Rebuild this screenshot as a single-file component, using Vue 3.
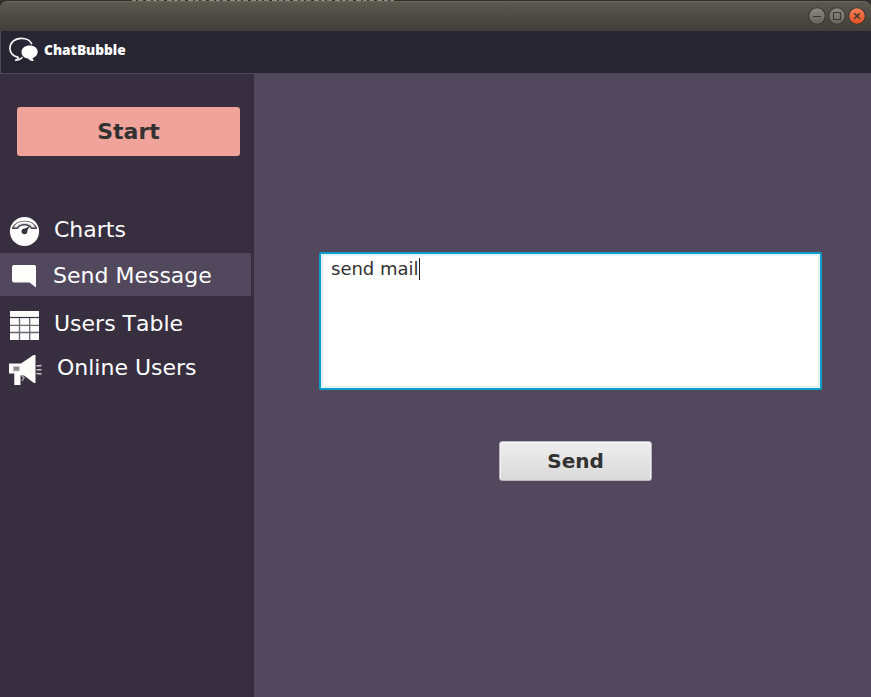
<script setup>
import { ref } from 'vue'

const message = ref('send mail')
const items = [
  { id: 'charts', label: 'Charts' },
  { id: 'message', label: 'Send Message' },
  { id: 'table', label: 'Users Table' },
  { id: 'online', label: 'Online Users' }
]
const active = ref('message')
</script>

<template>
  <div class="window">
    <div class="backdrop"></div>
    <div class="titlebar">
      <svg class="controls" width="64" height="31" viewBox="0 0 64 31">
        <defs>
          <linearGradient id="grey" x1="0" y1="0" x2="0" y2="1">
            <stop offset="0" stop-color="#8b8981" /><stop offset="1" stop-color="#65645d" />
          </linearGradient>
          <linearGradient id="orange" x1="0" y1="0" x2="0" y2="1">
            <stop offset="0" stop-color="#f68058" /><stop offset="1" stop-color="#e05020" />
          </linearGradient>
        </defs>
        <g stroke="#393832" stroke-width="1.1">
          <circle cx="10" cy="16" r="8.3" fill="url(#grey)" />
          <circle cx="30" cy="16" r="8.3" fill="url(#grey)" />
          <circle cx="50" cy="16" r="8.3" fill="url(#orange)" />
          <path d="M6 16.500h8M26.500 12.500h7v7h-7z" fill="none" />
          <path d="M47.200 13.200l5.600 5.600M52.800 13.200l-5.600 5.600" fill="none" stroke-width="1.500" />
        </g>
      </svg>
    </div>
    <header class="header">
      <svg width="44" height="42" viewBox="0 31 44 42">
        <path d="M18.500 57.300C13.500 56.500 9.900 53 9.900 48.500C9.900 42.500 15 38.300 21 38.300C26.500 38.300 30.800 40.800 31.800 44.200" fill="none" stroke="#f4f4f2" stroke-width="1.700" />
        <path d="M18.500 57Q18.500 59.300 15 60.300Q19.500 60.500 22.500 57.300" fill="none" stroke="#f4f4f2" stroke-width="1.400" />
        <path d="M29.700 45.500c4.600 0 8 2.700 8 6.300 0 3-1.800 5.200-5 6.200 0 1.500.5 2.300 1.500 3-3 0-5.200-1-6.200-2.600-4-.3-6.500-3-6.500-6.400 0-3.800 3.600-6.500 8.200-6.500z" fill="#fdfdfb" />
      </svg>
      <span class="brand">ChatBubble</span>
    </header>
    <div class="body">
      <aside class="sidebar">
        <button class="start">Start</button>
        <nav class="menu">
          <div v-for="item in items" :key="item.id" class="item" :class="[item.id, { active: active === item.id }]" @click="active = item.id">
            <svg v-if="item.id === 'charts'" class="icon" viewBox="0 208 50 43">
              <circle cx="24.500" cy="231.500" r="14.600" fill="#fdfdfb" />
              <path d="M12.500 228.300A12.500 9.600 0 0 1 36.500 228.300H31.500A7.500 5.500 0 0 0 17.500 228.300Z" fill="#d8d6d9" stroke="#4a4351" stroke-width="1.400" stroke-linejoin="round" />
              <path d="M15.500 226A10 6.600 0 0 1 33.500 226" fill="none" stroke="#fdfdfb" stroke-width="1.600" />
              <circle cx="24.500" cy="231.300" r="2.900" fill="#373040" />
              <path d="M23.500 229.800L30.300 225.300L26.300 232.300Z" fill="#373040" />
            </svg>
            <svg v-else-if="item.id === 'message'" class="icon" viewBox="0 253 50 43">
              <path d="M14 265H34.500Q36 265 36 266.500V287.500L29.500 282.500H14Q12 282.500 12 280.500V267Q12 265 14 265Z" fill="#fdfdfb" />
            </svg>
            <svg v-else-if="item.id === 'table'" class="icon" viewBox="0 301 50 43">
              <path d="M10 311H39V340H10Z" fill="#fdfdfb" />
              <path d="M10 317.500H39" stroke="#373040" stroke-width="1.200" />
              <path d="M10 325.300H39M10 332.500H39M19.500 318V340M29.700 318V340" stroke="#6c6672" stroke-width="1.300" />
            </svg>
            <svg v-else class="icon" viewBox="0 345 50 43">
              <path d="M9 363.500H21L33.500 355H35.500V383H34L24 375.500H20.500V385H14.300V373.500H9Z" fill="#fdfdfb" />
              <path d="M13.300 366.500H19.300V371H13.300Z" fill="#8a858d" stroke="#c8c5ca" />
              <path d="M21.800 376L24 377.500L22 381" fill="none" stroke="#aaa6ae" stroke-width="1.400" />
              <path d="M36.500 366L41.500 365.500M36.500 369.700H41.500M36.500 373.500L41.500 374" stroke="#cbc8cd" stroke-width="1.500" />
            </svg>
            <span>{{ item.label }}</span>
          </div>
        </nav>
      </aside>
      <main class="main">
        <div class="editor"><span>{{ message }}</span><i class="caret"></i></div>
        <button class="send">Send</button>
      </main>
    </div>
  </div>
</template>

<style>
body { margin: 0; background: #302e2c; }
</style>

<style scoped>
.window {
  box-sizing: border-box;
  width: 871px;
  height: 697px;
  display: flex;
  flex-direction: column;
  font-family: "DejaVu Sans", sans-serif;
  overflow: hidden;
}
.backdrop {
  width: 262px;
  height: 1px;
  flex: none;
  margin-left: 132px;
  background: repeating-linear-gradient(90deg, #8b8984 0 4px, #34322f 4px 6px, #75828c 6px 8px, #8f8674 8px 11px, #302e2c 11px 14px, #908e88 14px 19px, #3b3733 19px 21px);
}
.titlebar {
  box-sizing: border-box;
  height: 30px;
  flex: none;
  border-top: 1px solid #69665c;
  border-radius: 7px 7px 0 0;
  background: linear-gradient(#5b584f, #403f39);
  display: flex;
  justify-content: flex-end;
}
.controls { margin-top: -2px; }
.header {
  box-sizing: border-box;
  height: 43px;
  flex: none;
  display: flex;
  background: #282533;
  border-bottom: 1px solid #51475d;
  box-shadow: inset 1px 0 #51475d;
}
.brand {
  font: 800 13.7px/38px "Open Sans", sans-serif;
  color: #fff;
}
.body { flex: 1; display: flex; }
.sidebar {
  box-sizing: border-box;
  width: 254px;
  background: #372f3f;
  padding-top: 33px;
}
.start {
  display: block;
  box-sizing: border-box;
  width: 223px;
  height: 49px;
  margin: 0 0 52px 17px;
  padding: 0;
  border: 0;
  border-radius: 3px;
  background: #f0a39a;
  color: #323232;
  font: bold 22px/49px "DejaVu Sans", sans-serif;
}
.item {
  display: flex;
  width: 251px;
  height: 43px;
  color: #fff;
  font-size: 22px;
  font-kerning: none;
  line-height: 43px;
  white-space: nowrap;
}
.item.active { background: #52485e; }
.icon { width: 50px; height: 43px; flex: none; }
.charts { margin-bottom: 2px; }
.charts span { margin-left: 4px; }
.message { margin-bottom: 5px; }
.message span { margin-left: 3px; line-height: 45px; }
.table { margin-bottom: 1px; }
.table span { margin-left: 4px; line-height: 46px; }
.online span { margin-left: 7px; line-height: 46px; }
.main {
  flex: 1;
  background: #52485e;
  display: flex;
  flex-direction: column;
}
.editor {
  box-sizing: border-box;
  width: 503px;
  height: 138px;
  margin: 178px 0 51px 65px;
  border: 2px solid #0d9fca;
  border-radius: 2px;
  background: #fff;
  box-shadow: inset 0 0 0 2px #e1f3f9;
  padding: 4px 0 0 10px;
  display: flex;
  align-items: flex-start;
  color: #323232;
  font-size: 18px;
  line-height: 21px;
}
.caret { width: 1px; height: 22px; background: #222; }
.send {
  box-sizing: border-box;
  width: 153px;
  height: 40px;
  margin-left: 245px;
  padding: 1px 0 0;
  border: 1px solid #b9b6bb;
  border-radius: 3px;
  background: linear-gradient(#eee, #d9d9d9);
  box-shadow: inset 0 1px #fafafa, inset 1px 0 #f0f0f0, inset -1px 0 #f0f0f0;
  color: #323232;
  font: bold 20px/37px "DejaVu Sans", sans-serif;
}
</style>
